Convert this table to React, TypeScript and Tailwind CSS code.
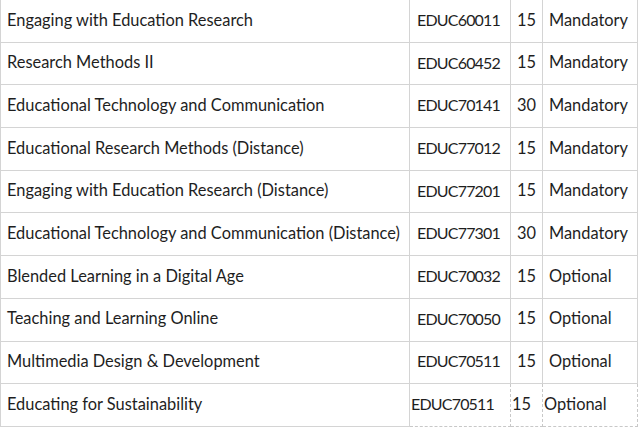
const courses = [
  { title: "Engaging with Education Research", code: "EDUC60011", credits: 15, type: "Mandatory" },
  { title: "Research Methods II", code: "EDUC60452", credits: 15, type: "Mandatory" },
  { title: "Educational Technology and Communication", code: "EDUC70141", credits: 30, type: "Mandatory" },
  { title: "Educational Research Methods (Distance)", code: "EDUC77012", credits: 15, type: "Mandatory" },
  { title: "Engaging with Education Research (Distance)", code: "EDUC77201", credits: 15, type: "Mandatory" },
  { title: "Educational Technology and Communication (Distance)", code: "EDUC77301", credits: 30, type: "Mandatory" },
  { title: "Blended Learning in a Digital Age", code: "EDUC70032", credits: 15, type: "Optional" },
  { title: "Teaching and Learning Online", code: "EDUC70050", credits: 15, type: "Optional" },
  { title: "Multimedia Design & Development", code: "EDUC70511", credits: 15, type: "Optional" },
];

export default function App() {
  return (
    <div className="w-[640px] h-[430px] bg-white overflow-hidden text-[#1e1e1e] text-[16.4px]" style={{ fontFamily: "Lato, 'Open Sans', sans-serif" }}>
      <table className="border-collapse table-fixed w-[637px] -mt-[1px]">
        <colgroup>
          <col className="w-[409px]" />
          <col className="w-[101px]" />
          <col className="w-[32px]" />
          <col className="w-[95px]" />
        </colgroup>
        <tbody>
          {courses.map((c, i) => (
            <tr key={c.code + i} className="h-[42.7px]">
              <td className="border border-[#d4d4d4] pl-[6px] pb-[2px]">{c.title}</td>
              <td className="border border-[#d4d4d4] pl-[7px] pb-[2px] text-[16px] tracking-[-0.05em]">{c.code}</td>
              <td className="border border-[#d4d4d4] pl-[6px] pb-[2px]">{c.credits}</td>
              <td className="border border-[#d4d4d4] pl-[6px] pb-[2px]">{c.type}</td>
            </tr>
          ))}
          <tr className="h-[42.7px]">
            <td className="border border-[#d4d4d4] pl-[6px] pb-[2px]">Educating for Sustainability</td>
            <td className="border border-dashed border-[#c8c8c8] pl-[1px] pb-[2px] text-[16px] tracking-[-0.05em]">EDUC70511</td>
            <td className="border border-dashed border-[#c8c8c8] pl-[1px] pb-[2px]">15</td>
            <td className="border border-dashed border-[#c8c8c8] pl-[1px] pb-[2px]">Optional</td>
          </tr>
        </tbody>
      </table>
    </div>
  );
}
